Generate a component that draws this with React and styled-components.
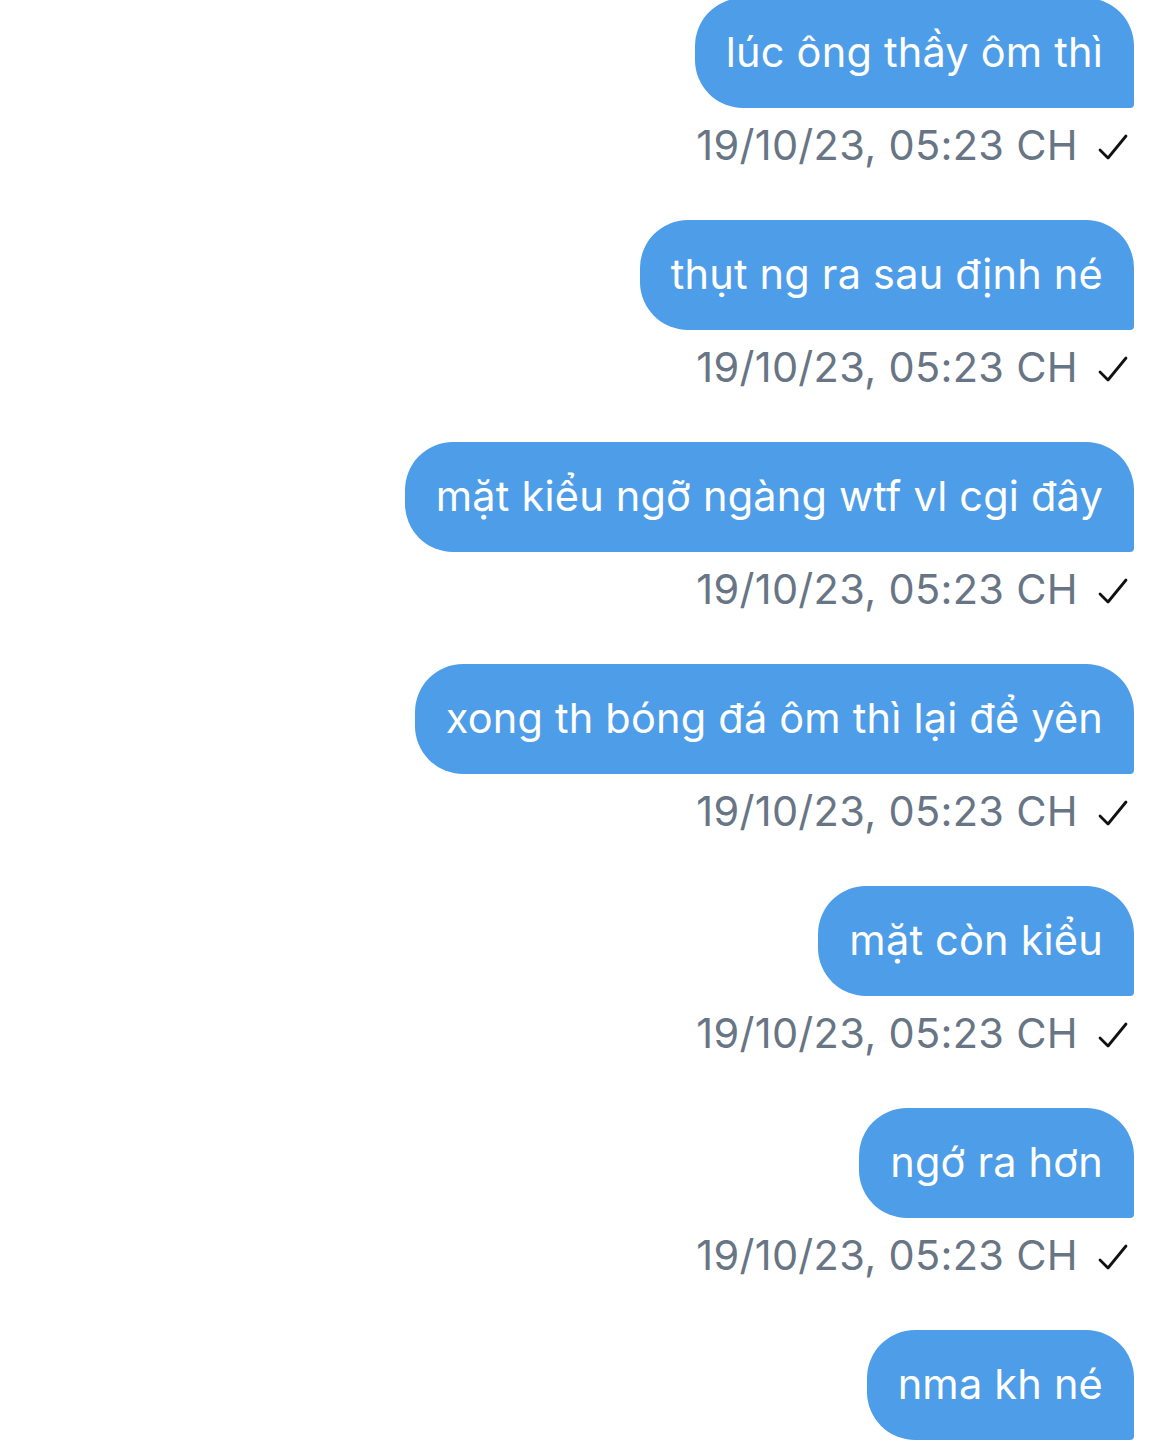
import React from "react";
import styled, { createGlobalStyle } from "styled-components";

const GlobalStyle = createGlobalStyle`
  html, body {
    margin: 0;
    padding: 0;
    background: #ffffff;
  }
  body {
    font-family: Inter, "Noto Sans", "Liberation Sans", sans-serif;
  }
`;

const messages = [
  "lúc ông thầy ôm thì",
  "thụt ng ra sau định né",
  "mặt kiểu ngỡ ngàng wtf vl cgi đây",
  "xong th bóng đá ôm thì lại để yên",
  "mặt còn kiểu",
  "ngớ ra hơn",
  "nma kh né",
];

const App = () => {
  return (
    <>
      <GlobalStyle />
      <Thread>
        {messages.map((text, i) => (
          <Message key={i}>
            <Bubble>{text}</Bubble>
            {i < messages.length - 1 && (
              <Meta>
                <Time>19/10/23, 05:23 CH</Time>
                <Tick viewBox="0 0 30 28" fill="none">
                  <path
                    d="M2 17 L10 25 L28 3"
                    stroke="#111"
                    strokeWidth="2.8"
                    strokeLinecap="round"
                    strokeLinejoin="round"
                  />
                </Tick>
              </Meta>
            )}
          </Message>
        ))}
      </Thread>
    </>
  );
};

export default App;

const Thread = styled.div`
  display: flex;
  flex-direction: column;
  align-items: flex-end;
  gap: 50px;
  padding: 0 36px 0 0;
  margin-top: -2px;
  height: 1449px;
  overflow: hidden;
`;

const Message = styled.div`
  display: flex;
  flex-direction: column;
  align-items: flex-end;
`;

const Bubble = styled.div`
  height: 110px;
  display: flex;
  align-items: center;
  padding: 0 31px 2px;
  box-sizing: border-box;
  background: #4e9de8;
  color: #ffffff;
  font-size: 41.5px;
  letter-spacing: 0.2px;
  border-radius: 48px 48px 4px 48px;
  white-space: nowrap;
`;

const Meta = styled.div`
  display: flex;
  align-items: center;
  gap: 20px;
  margin-top: 12px;
  height: 50px;
  padding-right: 6px;
`;

const Time = styled.span`
  font-size: 41.5px;
  color: #687585;
  letter-spacing: 0.3px;
`;

const Tick = styled.svg`
  width: 30px;
  height: 28px;
  margin-top: 4px;
`;
